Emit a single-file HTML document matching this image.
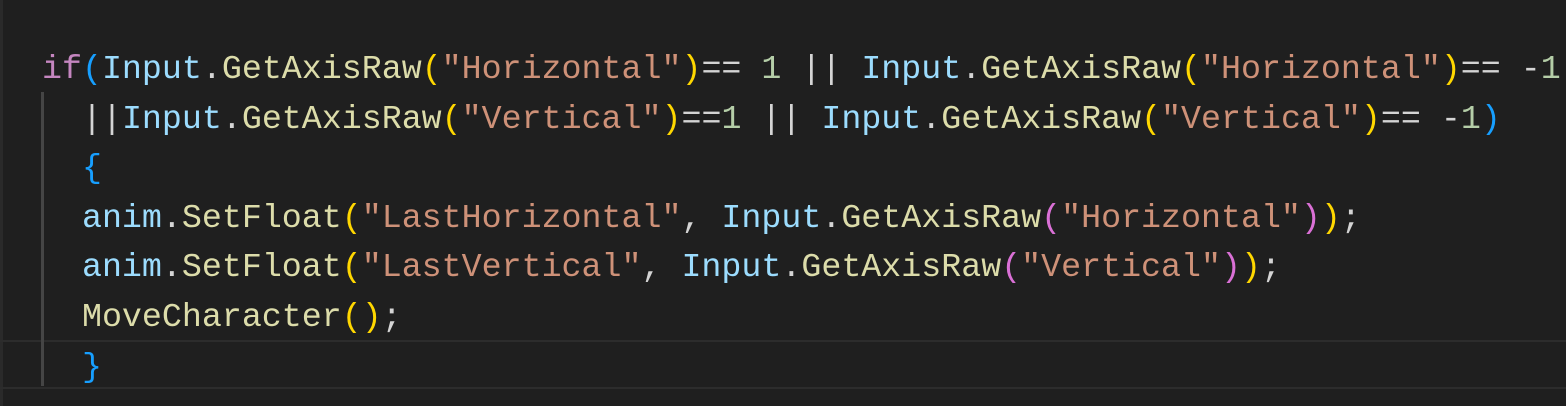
<!DOCTYPE html><html><head><style>
body{margin:0;background:#1f1f1f;width:1566px;height:406px;overflow:hidden;position:relative}
pre{margin:0;position:absolute;left:42px;top:45px;font:33.3px/49.6px "Liberation Mono",monospace;color:#d4d4d4;letter-spacing:0}
.k{color:#c586c0}.v{color:#9cdcfe}.f{color:#dcdcaa}.s{color:#ce9178}.n{color:#b5cea8}
.b1{color:#179fff}.b2{color:#ffd700}.b3{color:#da70d6}
.guide{position:absolute;left:41px;top:92px;width:3px;height:294px;background:#454545}
.cur{position:absolute;left:0;right:0;top:340px;height:45px;border-top:2px solid #2c2c2c;border-bottom:2px solid #2c2c2c}
.edge{position:absolute;left:0;top:0;width:3px;height:406px;background:#2a2a2a}
</style></head><body>
<div class="edge"></div><div class="cur"></div><div class="guide"></div>
<pre><span class="k">if</span><span class="b1">(</span><span class="v">Input</span>.<span class="f">GetAxisRaw</span><span class="b2">(</span><span class="s">"Horizontal"</span><span class="b2">)</span>== <span class="n">1</span> || <span class="v">Input</span>.<span class="f">GetAxisRaw</span><span class="b2">(</span><span class="s">"Horizontal"</span><span class="b2">)</span>== -<span class="n">1</span>
  ||<span class="v">Input</span>.<span class="f">GetAxisRaw</span><span class="b2">(</span><span class="s">"Vertical"</span><span class="b2">)</span>==<span class="n">1</span> || <span class="v">Input</span>.<span class="f">GetAxisRaw</span><span class="b2">(</span><span class="s">"Vertical"</span><span class="b2">)</span>== -<span class="n">1</span><span class="b1">)</span>
  <span class="b1">{</span>
  <span class="v">anim</span>.<span class="f">SetFloat</span><span class="b2">(</span><span class="s">"LastHorizontal"</span>, <span class="v">Input</span>.<span class="f">GetAxisRaw</span><span class="b3">(</span><span class="s">"Horizontal"</span><span class="b3">)</span><span class="b2">)</span>;
  <span class="v">anim</span>.<span class="f">SetFloat</span><span class="b2">(</span><span class="s">"LastVertical"</span>, <span class="v">Input</span>.<span class="f">GetAxisRaw</span><span class="b3">(</span><span class="s">"Vertical"</span><span class="b3">)</span><span class="b2">)</span>;
  <span class="f">MoveCharacter</span><span class="b2">()</span>;
  <span class="b1">}</span></pre>
</body></html>
